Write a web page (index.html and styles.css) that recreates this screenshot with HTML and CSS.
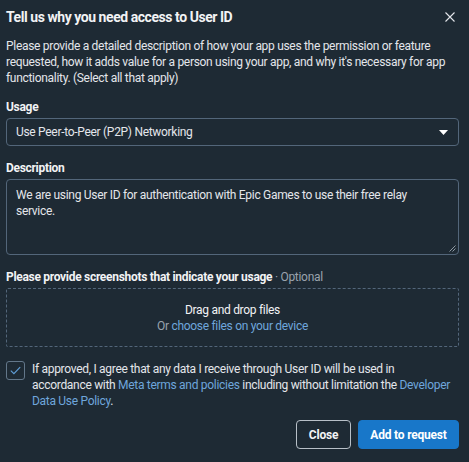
FILE: index.html
```html
<!DOCTYPE html>
<html>
<head>
<meta charset="utf-8">
<link rel="stylesheet" href="styles.css">
</head>
<body>
<div class="dialog">
  <div class="header">
    <h1 class="title">Tell us why you need access to User ID</h1>
    <button class="close-x" aria-label="Close">
      <svg width="10" height="10" viewBox="0 0 10 10"><path d="M0.5 0.5 L9.5 9.5 M9.5 0.5 L0.5 9.5" stroke="#e4e6eb" stroke-width="1.1" fill="none"/></svg>
    </button>
  </div>
  <p class="intro">Please provide a detailed description of how your app uses the permission or feature requested, how it adds value for a person using your app, and why it's necessary for app functionality. (Select all that apply)</p>

  <div class="label label-first">Usage</div>
  <div class="select">
    <span>Use Peer-to-Peer (P2P) Networking</span>
    <svg class="caret" width="9" height="5" viewBox="0 0 9 5"><path d="M0 0 H9 L4.5 5 Z" fill="#ffffff"/></svg>
  </div>

  <div class="label">Description</div>
  <div class="textarea">
    We are using User ID for authentication with Epic Games to use their free relay service.
    <svg class="grip" width="7" height="7" viewBox="0 0 7 7"><path d="M6.5 0.5 L0.5 6.5 M6.5 3.5 L3.5 6.5" stroke="#9aa5af" stroke-width="0.9" fill="none"/></svg>
  </div>

  <div class="label">Please provide screenshots that indicate your usage <span class="optional">· Optional</span></div>
  <div class="dropzone">
    <div class="drop-title">Drag and drop files</div>
    <div class="drop-sub">Or <a class="link">choose files on your device</a></div>
  </div>

  <div class="agree">
    <div class="checkbox">
      <svg width="11" height="9" viewBox="0 0 11 9"><path d="M0.8 4.6 L3.9 7.6 L10.2 1.2" stroke="#5f9dd6" stroke-width="1.2" fill="none"/></svg>
    </div>
    <p class="agree-text">If approved, I agree that any data I receive through User ID will be used in accordance with <a class="link">Meta terms and policies</a> including without limitation the <a class="link">Developer Data Use Policy</a>.</p>
  </div>

  <div class="footer">
    <button class="btn btn-secondary">Close</button>
    <button class="btn btn-primary">Add to request</button>
  </div>
</div>
</body>
</html>
```

FILE: styles.css
```css
html, body {
  margin: 0;
  padding: 0;
  background: #1e2a34;
}
body {
  font-family: Roboto, "Noto Sans", sans-serif;
  color: #e4e6eb;
  font-size: 12px;
  line-height: 16px;
  letter-spacing: -0.3px;
}
.dialog {
  padding: 0 10px 0 6px;
  width: 453px;
}
.header {
  display: flex;
  justify-content: space-between;
  align-items: center;
  height: 30px;
  padding-top: 2px;
}
.title {
  margin: 0;
  font-size: 14px;
  font-weight: 700;
  letter-spacing: -0.45px;
  color: #f2f3f5;
}
.close-x {
  background: none;
  border: none;
  padding: 0;
  margin-right: 4px;
  display: flex;
}
.intro {
  margin: 6px 0 0;
  color: #e4e6eb;
}
.label {
  font-weight: 700;
  margin-top: 14px;
  color: #f2f3f5;
}
.label-first {
  margin-top: 13px;
}
.optional {
  font-weight: 400;
  color: #9aa3ad;
}
.select {
  margin-top: 3px;
  height: 26px;
  border: 1px solid #53667a;
  border-radius: 4px;
  display: flex;
  align-items: center;
  justify-content: space-between;
  padding: 0 10px 0 9px;
}
.textarea {
  position: relative;
  margin-top: 3px;
  height: 58px;
  border: 1px solid #53667a;
  border-radius: 4px;
  padding: 7px 20px 9px 9px;
}
.grip {
  position: absolute;
  right: 2px;
  bottom: 2px;
}
.dropzone {
  margin-top: 3px;
  height: 57px;
  border: 1px dashed #53667a;
  border-radius: 2px;
  display: flex;
  flex-direction: column;
  align-items: center;
  justify-content: center;
}
.drop-title {
  color: #f2f3f5;
}
.drop-sub {
  color: #9aa3ad;
}
.link {
  color: #6ea6dc;
}
.agree {
  display: flex;
  gap: 7px;
  margin-top: 14px;
}
.checkbox {
  flex: none;
  width: 17px;
  height: 17px;
  border: 1px solid #63778a;
  border-radius: 3px;
  display: flex;
  align-items: center;
  justify-content: center;
  margin-top: 0;
}
.agree-text {
  margin: 0;
  max-width: 424px;
}
.footer {
  display: flex;
  justify-content: flex-end;
  gap: 7px;
  margin-top: 11px;
}
.btn {
  font-family: inherit;
  font-size: 12px;
  font-weight: 700;
  letter-spacing: -0.2px;
  height: 29px;
  border-radius: 4px;
  padding: 0;
}
.btn-secondary {
  width: 55px;
  background: transparent;
  border: 1px solid #b8c0c8;
  color: #f2f3f5;
}
.btn-primary {
  width: 101px;
  background: #1877c9;
  border: 1px solid #1877c9;
  color: #ffffff;
}
```
